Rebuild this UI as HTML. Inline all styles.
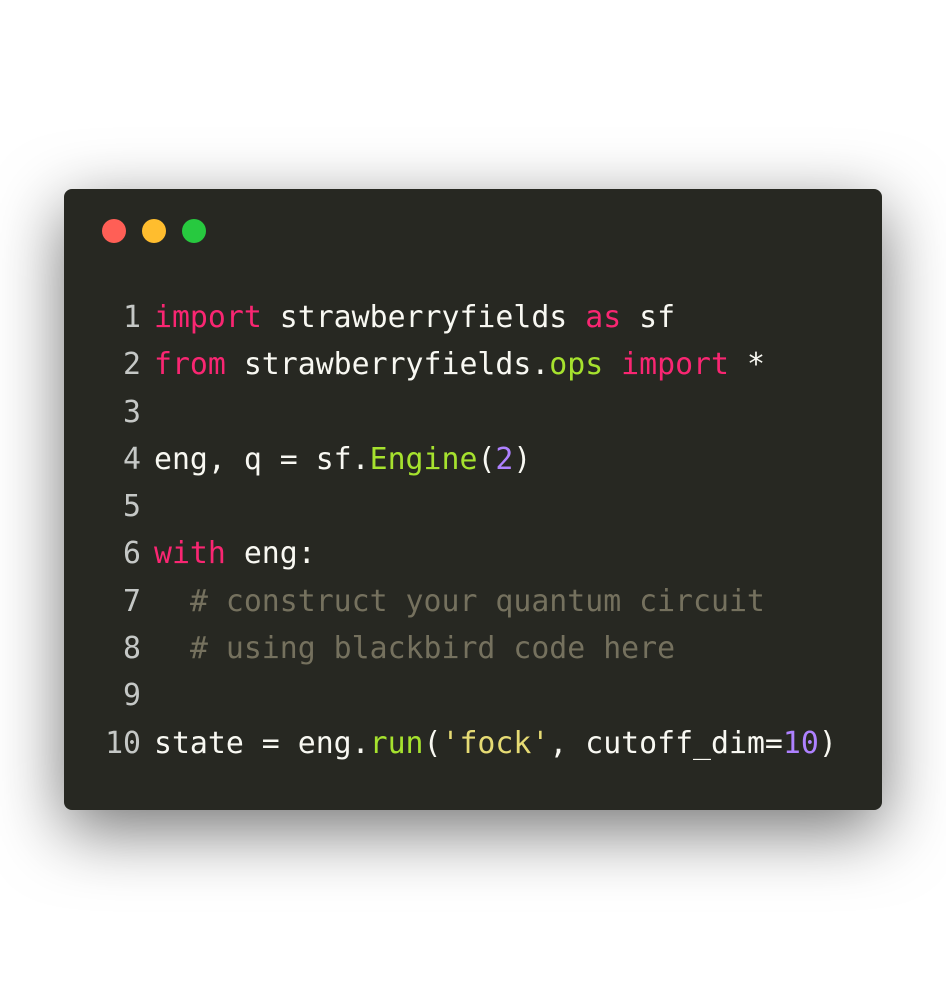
<!DOCTYPE html>
<html><head><style>
html,body{margin:0;padding:0;background:#fff;width:946px;height:991px;overflow:hidden}
.win{position:absolute;left:64px;top:189px;width:818px;height:621px;background:#272822;border-radius:8px;box-shadow:0 20px 68px rgba(0,0,0,0.55)}
.dot{position:absolute;top:30px;width:24px;height:24px;border-radius:50%}
pre{position:absolute;left:0;top:105px;margin:0;font-family:"DejaVu Sans Mono","Liberation Mono",monospace;font-size:29.85px;line-height:47.3px;color:#f8f8f2}
.n{display:inline-block;width:77px;text-align:right;color:#c5c8c6;margin-right:13px}
.k{color:#f92672}.g{color:#a6e22e}.p{color:#ae81ff}.c{color:#75715e}.s{color:#e6db74}
</style></head><body>
<div class="win">
<div class="dot" style="left:38px;background:#ff5f56"></div>
<div class="dot" style="left:78px;background:#ffbd2e"></div>
<div class="dot" style="left:118px;background:#27c93f"></div>
<pre><span class="n">1</span><span class="k">import</span> strawberryfields <span class="k">as</span> sf
<span class="n">2</span><span class="k">from</span> strawberryfields.<span class="g">ops</span> <span class="k">import</span> *
<span class="n">3</span>
<span class="n">4</span>eng, q = sf.<span class="g">Engine</span>(<span class="p">2</span>)
<span class="n">5</span>
<span class="n">6</span><span class="k">with</span> eng:
<span class="n">7</span>  <span class="c"># construct your quantum circuit</span>
<span class="n">8</span>  <span class="c"># using blackbird code here</span>
<span class="n">9</span>
<span class="n">10</span>state = eng.<span class="g">run</span>(<span class="s">'fock'</span>, cutoff_dim=<span class="p">10</span>)</pre>
</div>
</body></html>
